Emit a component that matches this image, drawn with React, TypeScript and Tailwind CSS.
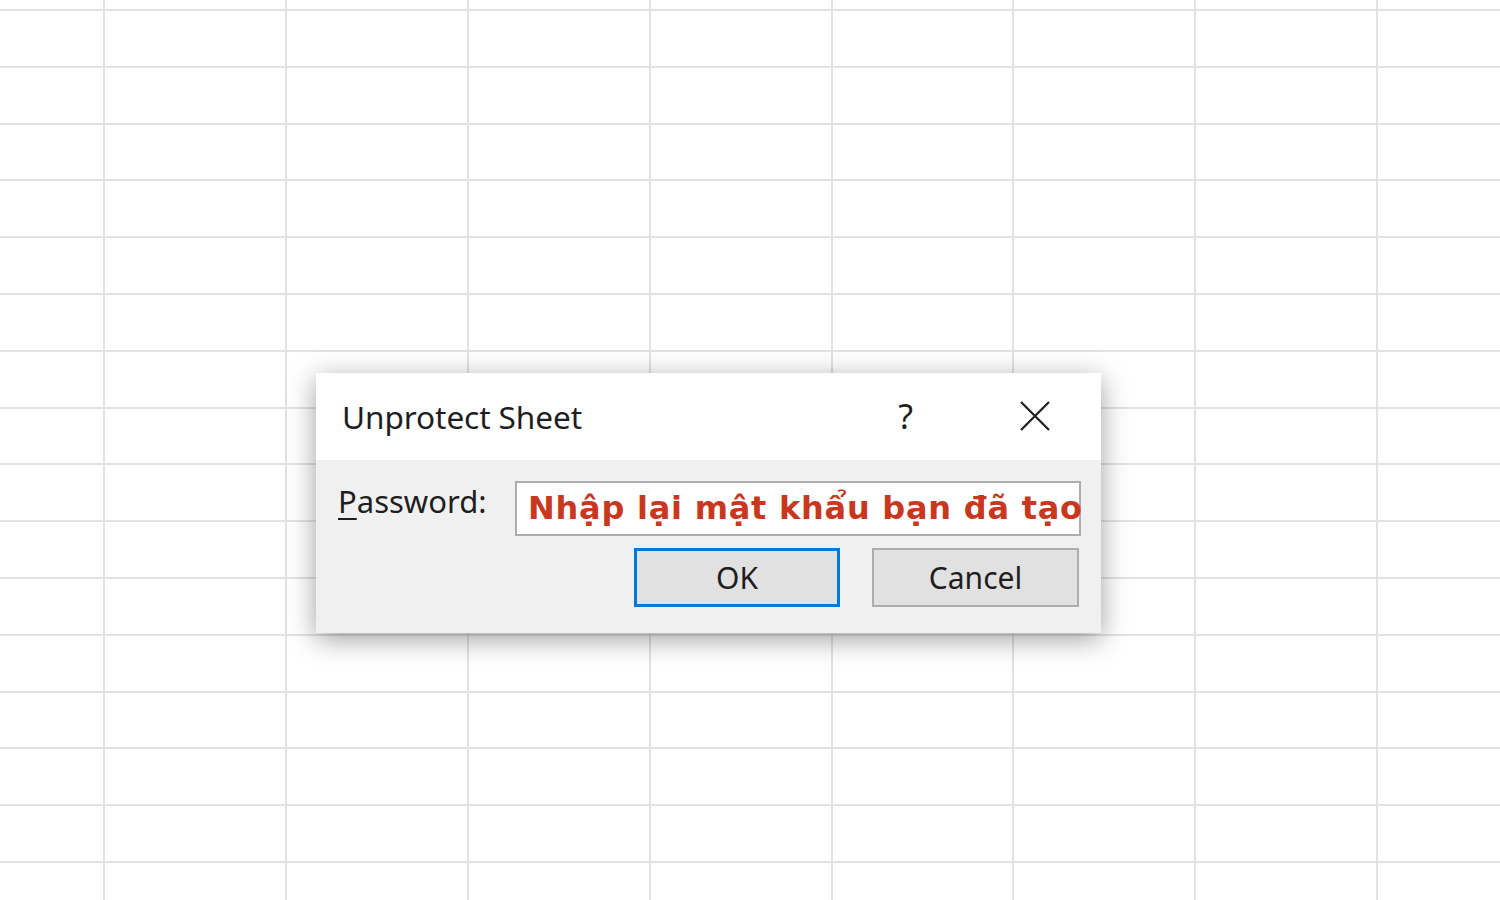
import React from 'react';

const ROWS = 17;
const COLS = 9;

const SheetGrid: React.FC = () => (
  <div className="grid grid-cols-[105px_repeat(8,181.9px)] grid-rows-[11px_repeat(16,56.8px)]">
    {Array.from({ length: ROWS * COLS }).map((_, i) => (
      <div key={i} className="border-r-2 border-b-2 border-[#e2e2e2]" />
    ))}
  </div>
);

const App: React.FC = () => {
  return (
    <div className="relative w-[1500px] h-[900px] overflow-hidden bg-white">
      <SheetGrid />

      {/* Unprotect Sheet dialog */}
      <div
        className="absolute left-[316px] top-[373px] w-[785px] h-[260px] flex flex-col bg-[#f0f0f0] shadow-[0_6px_26px_rgba(0,0,0,0.38)]"
        style={{ fontFamily: '"Noto Sans", "Open Sans", sans-serif' }}
      >
        <div className="h-[87px] bg-white flex items-center pl-[26px] pr-[50px]">
          <span className="flex-1 text-[31.6px] leading-none text-[#1e1e1e] tracking-[-0.1px]">Unprotect Sheet</span>
          <span className="text-[34px] leading-none text-[#1e1e1e] mr-[106px] -mt-[2px]">?</span>
          <svg width="32" height="32" viewBox="0 0 32 32" className="mt-[-2px]">
            <path d="M2 2 L30 30 M30 2 L2 30" stroke="#1e1e1e" strokeWidth="2.2" fill="none" />
          </svg>
        </div>

        <div className="flex-1 flex flex-col pt-[21px] pl-[22px] pr-[20px]">
          <div className="flex items-start">
            <label className="w-[177px] shrink-0 pt-[5px] text-[31px] leading-none text-[#1e1e1e]">
              <span className="underline underline-offset-[5px] decoration-2">P</span>assword:
            </label>
            <div className="flex-1 min-w-0 h-[55px] bg-white border-2 border-[#adadad] flex items-center pl-[11px] overflow-visible whitespace-nowrap">
              <span
                className="text-[32px] font-bold leading-none text-[#c8381f] pb-[2px] tracking-[0.75px]"
                style={{ fontFamily: '"DejaVu Sans", "Noto Sans", sans-serif' }}
              >
                Nhập lại mật khẩu bạn đã tạo
              </span>
            </div>
          </div>

          <div className="flex justify-end gap-[32px] mt-[12px] pr-[2px]">
            <button className="w-[206px] h-[59px] bg-[#e1e1e1] border-[3px] border-[#0078d7] text-[30px] leading-none text-[#1e1e1e]">
              OK
            </button>
            <button className="w-[207px] h-[59px] bg-[#e1e1e1] border-2 border-[#adadad] text-[30px] leading-none text-[#1e1e1e]">
              Cancel
            </button>
          </div>
        </div>
      </div>
    </div>
  );
};

export default App;
